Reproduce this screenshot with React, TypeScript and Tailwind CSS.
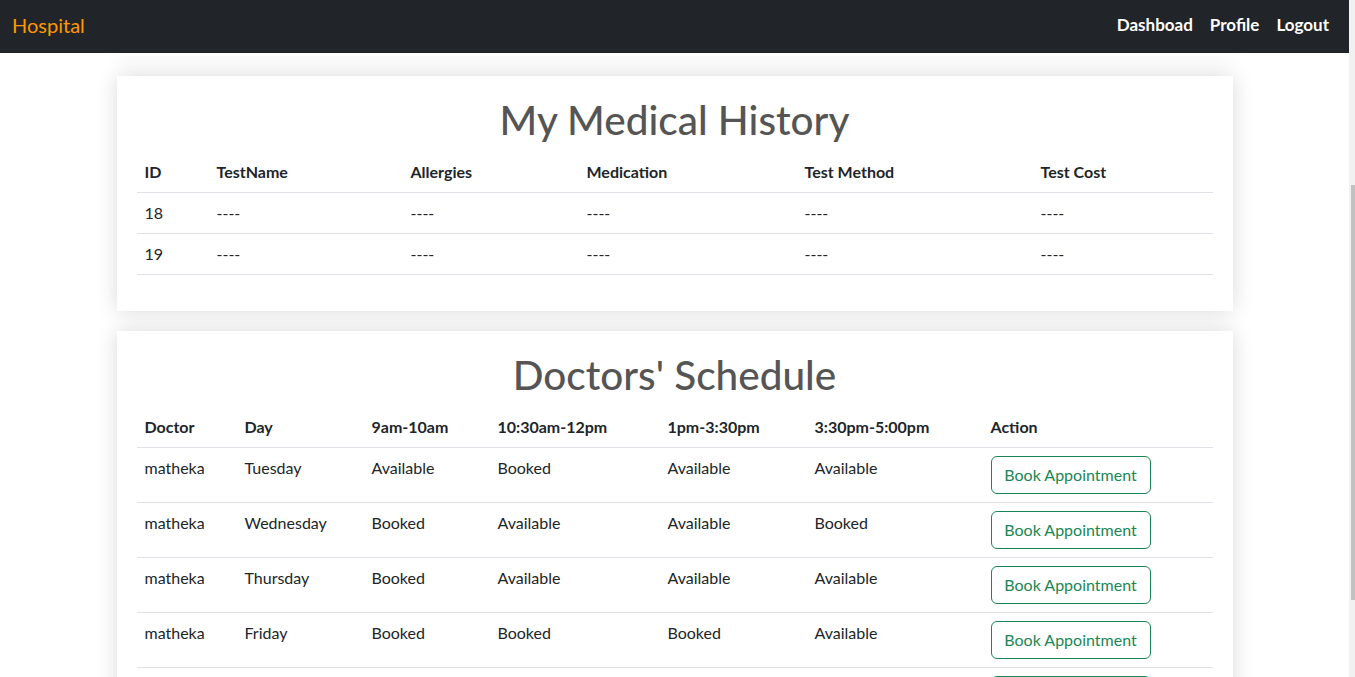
import React from "react";

const FONT = "font-['Segoe_UI','Lato','Roboto',sans-serif]";

const historyCols = [
  { name: "ID", w: 72 },
  { name: "TestName", w: 194 },
  { name: "Allergies", w: 176 },
  { name: "Medication", w: 218 },
  { name: "Test Method", w: 236 },
  { name: "Test Cost", w: 180 },
];

const historyRows = [
  ["18", "----", "----", "----", "----", "----"],
  ["19", "----", "----", "----", "----", "----"],
];

const schedCols = [
  { name: "Doctor", w: 100 },
  { name: "Day", w: 127 },
  { name: "9am-10am", w: 126 },
  { name: "10:30am-12pm", w: 170 },
  { name: "1pm-3:30pm", w: 147 },
  { name: "3:30pm-5:00pm", w: 176 },
  { name: "Action", w: 230 },
];

const schedRows = [
  ["matheka", "Tuesday", "Available", "Booked", "Available", "Available"],
  ["matheka", "Wednesday", "Booked", "Available", "Available", "Booked"],
  ["matheka", "Thursday", "Booked", "Available", "Available", "Available"],
  ["matheka", "Friday", "Booked", "Booked", "Booked", "Available"],
  ["matheka", "Saturday", "Available", "Booked", "Available", "Available"],
];

function Card({ title, children }: { title: string; children: React.ReactNode }) {
  return (
    <div className="w-[1116px] shrink-0 bg-white p-5 shadow-[0_0_20px_rgba(0,0,0,0.15)]">
      <h1 className="mb-2 text-center text-[40.5px] font-medium leading-[48px] text-[#555555]">{title}</h1>
      {children}
    </div>
  );
}

export default function App() {
  return (
    <div className={`flex h-screen w-full overflow-hidden bg-white text-[#212529] ${FONT}`}>
      <div className="flex min-w-0 flex-1 flex-col">
        <nav className="relative z-10 flex h-[53px] shrink-0 items-center justify-between bg-[#212529] pb-[3px] pl-3 pr-5">
          <span className="text-[20px] leading-[30px] text-[#ff9800]">Hospital</span>
          <div className="flex gap-[17px] text-[17px] font-bold leading-6 text-white">
            <span>Dashboad</span>
            <span>Profile</span>
            <span>Logout</span>
          </div>
        </nav>
        <div className="flex min-h-0 flex-1 flex-col items-center overflow-hidden">
          <div className="h-[3px] w-[1116px] shrink-0 bg-white shadow-[0_0_20px_rgba(0,0,0,0.15)]" />
          <div className="h-5 shrink-0" />
          <Card title="My Medical History">
            <table className="mb-4 w-full table-fixed border-collapse text-[16px] leading-6">
              <colgroup>
                {historyCols.map((c) => (
                  <col key={c.name} style={{ width: c.w }} />
                ))}
              </colgroup>
              <thead>
                <tr className="border-b border-[#dee2e6]">
                  {historyCols.map((c) => (
                    <th key={c.name} className="p-2 text-left font-bold">
                      {c.name}
                    </th>
                  ))}
                </tr>
              </thead>
              <tbody>
                {historyRows.map((r, i) => (
                  <tr key={i} className="border-b border-[#dee2e6]">
                    {r.map((v, j) => (
                      <td key={j} className="p-2 align-top">
                        {v}
                      </td>
                    ))}
                  </tr>
                ))}
              </tbody>
            </table>
          </Card>
          <div className="h-5 shrink-0" />
          <Card title="Doctors' Schedule">
            <table className="mb-4 w-full table-fixed border-collapse text-[16px] leading-6">
              <colgroup>
                {schedCols.map((c) => (
                  <col key={c.name} style={{ width: c.w }} />
                ))}
              </colgroup>
              <thead>
                <tr className="border-b border-[#dee2e6]">
                  {schedCols.map((c) => (
                    <th key={c.name} className="p-2 text-left font-bold">
                      {c.name}
                    </th>
                  ))}
                </tr>
              </thead>
              <tbody>
                {schedRows.map((r, i) => (
                  <tr key={i} className="border-b border-[#dee2e6]">
                    {r.map((v, j) => (
                      <td key={j} className="p-2 align-top">
                        {v}
                      </td>
                    ))}
                    <td className="p-2 align-top">
                      <button className="h-[38px] w-[160px] rounded-[6px] border border-[#198754] text-[16px] leading-6 text-[#198754]">
                        Book Appointment
                      </button>
                    </td>
                  </tr>
                ))}
              </tbody>
            </table>
          </Card>
        </div>
      </div>
      <div className="flex w-[6px] shrink-0 flex-col bg-[#f1f1f1]">
        <div className="ml-[2px] mt-[185px] h-[415px] w-[4px] bg-[#c1c1c1]" />
      </div>
    </div>
  );
}
